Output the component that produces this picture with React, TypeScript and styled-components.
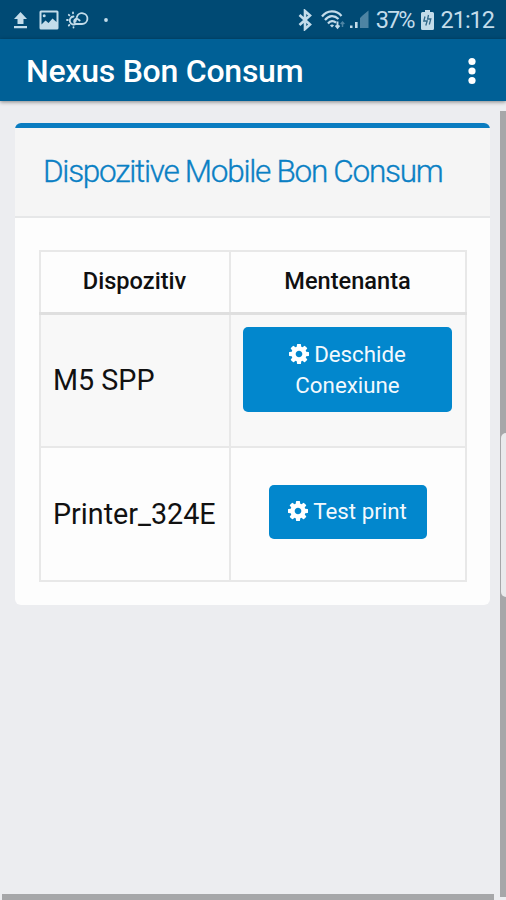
import React from "react";
import styled, { createGlobalStyle } from "styled-components";

const GlobalStyle = createGlobalStyle`
  *, *::before, *::after { box-sizing: border-box; }
  html, body { margin: 0; padding: 0; background: #ecedf0; }
  body { font-family: Roboto, "Liberation Sans", sans-serif; overflow: hidden; }
`;

const Screen = styled.div`
  width: 506px;
  height: 900px;
  display: flex;
  flex-direction: column;
  background: #ecedf0;
`;

const StatusBar = styled.div`
  height: 39px;
  flex: none;
  display: flex;
  justify-content: space-between;
  padding: 0 12px 0 13px;
  background: #004a74;
  color: #c3dcea;
`;

const StatusGroup = styled.div`
  display: flex;
  align-items: center;
`;

const StatusIcon = styled.svg<{ $gap: number }>`
  flex: none;
  margin-right: ${(p) => p.$gap}px;
`;

const StatusText = styled.span<{ $spacing: number; $gap?: number }>`
  font-size: 23.5px;
  line-height: 28px;
  padding-top: 1px;
  letter-spacing: ${(p) => p.$spacing}px;
  margin-right: ${(p) => p.$gap ?? 0}px;
  white-space: nowrap;
`;

const AppBar = styled.header`
  height: 62px;
  flex: none;
  display: flex;
  align-items: center;
  justify-content: space-between;
  padding: 2px 29px 0 26px;
  background: #006096;
  box-shadow: 0 1px 4px rgba(0, 0, 0, 0.45);
  z-index: 1;
`;

const AppTitle = styled.h1`
  margin: 0;
  font-size: 32px;
  line-height: 40px;
  font-weight: 500;
  letter-spacing: -0.25px;
  color: #fff;
  white-space: nowrap;
`;

const Viewport = styled.div`
  flex: 1;
  min-height: 0;
  display: grid;
  grid-template-columns: 500px 6px;
`;

const Content = styled.main`
  display: flex;
  flex-direction: column;
  justify-content: space-between;
  padding: 22px 6px 0 2px;
`;

const HorizontalBar = styled.div`
  height: 6px;
  background: #a6a7a9;
`;

const VerticalTrack = styled.div`
  margin: 10px 0 3px;
  padding: 322px 0 0 1px;
  background: #a6a7a9;
`;

const VerticalThumb = styled.div`
  height: 164px;
  border-radius: 5px 0 0 5px;
  background: #e9eaec;
`;

const Card = styled.section`
  width: 475px;
  margin-left: 13px;
  border-radius: 6px;
  overflow: hidden;
  background: #fdfdfd;
`;

const CardHeader = styled.div`
  height: 95px;
  padding: 21px 29px 0 28px;
  border-top: 5px solid #0a7cc0;
  border-bottom: 2px solid #e6e7e8;
  background: #f5f5f5;
`;

const CardTitle = styled.h2`
  margin: 0;
  font-size: 31.5px;
  line-height: 46px;
  font-weight: 300;
  letter-spacing: -1.27px;
  color: #0a80c4;
  -webkit-text-stroke: 0.35px #0a80c4;
  white-space: nowrap;
`;

const CardBody = styled.div`
  padding: 32px 23px 23px 24px;
`;

const DeviceTable = styled.table`
  width: 427px;
  table-layout: fixed;
  border-collapse: collapse;
`;

const HeadCell = styled.th<{ $width: number }>`
  width: ${(p) => p.$width}px;
  height: 62px;
  padding: 0 1px 2px 0;
  border: 2px solid #e8e8e8;
  border-bottom: 3px solid #dfdfdf;
  font-size: 23.6px;
  font-weight: 500;
  color: #101010;
`;

const DeviceRow = styled.tr<{ $striped?: boolean }>`
  height: 134px;
  background: ${(p) => (p.$striped ? "#f8f8f8" : "#fdfdfd")};
`;

const NameCell = styled.td`
  padding: 0 0 0 12px;
  border: 2px solid #e8e8e8;
  font-size: 28.7px;
  color: #111;
  white-space: nowrap;
`;

const ActionCell = styled.td<{ $bottom: number }>`
  padding: 0 13px ${(p) => p.$bottom}px 12px;
  border: 2px solid #e8e8e8;
  text-align: center;
`;

const ActionButton = styled.button<{ $wide?: boolean }>`
  display: block;
  width: ${(p) => (p.$wide ? 209 : 158)}px;
  height: ${(p) => (p.$wide ? 85 : 54)}px;
  margin: 0 auto;
  padding: 0;
  border: 0;
  border-radius: 5px;
  background: #0287cd;
  color: #f3f9fd;
  font: 400 22.3px/31px Roboto, "Liberation Sans", sans-serif;
`;

const GearIcon = styled.svg`
  width: 20px;
  height: 20px;
  margin-right: 5px;
  vertical-align: -2px;
  fill: #fff;
`;

const Gear = () => (
  <GearIcon viewBox="0 0 1536 1536">
    <path d="M1024 768q0-106-75-181t-181-75-181 75-75 181 75 181 181 75 181-75 75-181zm512-109v222q0 12-8 23t-20 13l-185 28q-19 54-39 91 35 50 107 138 10 12 10 25t-9 23q-27 37-99 108t-94 71q-12 0-26-9l-138-108q-44 23-91 38-16 136-29 186-7 28-36 28h-222q-14 0-24.500-8.500t-11.500-21.500l-28-184q-49-16-90-37l-141 107q-10 9-25 9-14 0-25-11-126-114-165-168-7-10-7-23 0-12 8-23 15-21 51-66.500t54-70.500q-27-50-41-99l-183-27q-13-2-21-12.500t-8-23.500v-222q0-12 8-23t19-13l186-28q14-46 39-92-40-57-107-138-10-12-10-24 0-10 9-23 26-36 98.500-107.500t94.500-71.500q13 0 26 10l138 107q44-23 91-38 16-136 29-186 7-28 36-28h222q14 0 24.500 8.500t11.500 21.500l28 184q49 16 90 37l142-107q9-9 24-9 13 0 25 10 129 119 165 170 7 8 7 22 0 12-8 23-15 21-51 66.500t-54 70.500q26 50 41 98l183 28q13 2 21 12.500t8 23.500z" />
  </GearIcon>
);

const UploadIcon = () => (
  <StatusIcon $gap={11} width="15" height="18" viewBox="0 0 15 18" fill="currentColor">
    <path d="M7.500 1 14 8h-3.500v5h-6V8H1zM1 15h13v2.200H1z" />
  </StatusIcon>
);

const PictureIcon = () => (
  <StatusIcon $gap={7} width="20" height="20" viewBox="0 0 20 20" fill="currentColor">
    <path
      fillRule="evenodd"
      d="M2 .5h16q1.500 0 1.500 1.500v16q0 1.500-1.500 1.500H2Q.5 19.500.5 18V2Q.5.500 2 .500zM2.500 2.500v12l4-4 3 2.500 4-4.500 4 3.500V2.500zM5.200 4.300a1.500 1.500 0 1 1 0 3 1.500 1.500 0 0 1 0-3z"
    />
  </StatusIcon>
);

const WeatherIcon = () => (
  <StatusIcon
    $gap={15}
    width="23"
    height="18"
    viewBox="0 0 23 18"
    fill="none"
    stroke="currentColor"
    strokeWidth="1.800"
    strokeLinecap="round"
  >
    <path d="M10.500 13h5.500a5.400 5.400 0 1 0-5.200-6.800L9.500 10.500" />
    <path d="M10.500 13a2.600 2.600 0 1 1 1.200-5l2 1.500" />
    <path d="M7.500 5.500a4 4 0 1 0 2.500 7.300" />
    <path d="M7 1.500v.8M2.800 3.800l.6.600M1 9h.8M2.800 14.500l.6-.6M7.500 16.500v-.4" />
  </StatusIcon>
);

const DotIcon = () => (
  <StatusIcon $gap={0} width="4" height="4" viewBox="0 0 4 4" fill="currentColor">
    <circle cx="2" cy="2" r="1.900" />
  </StatusIcon>
);

const BluetoothIcon = () => (
  <StatusIcon
    $gap={9}
    width="14"
    height="22"
    viewBox="0 0 14 22"
    fill="none"
    stroke="currentColor"
    strokeWidth="2.600"
    strokeLinejoin="miter"
  >
    <path d="M1.500 6 12 15.500l-5 4.500V2l5 4.500L1.500 16" />
  </StatusIcon>
);

const WifiIcon = () => (
  <StatusIcon $gap={4} width="24" height="20" viewBox="0 0 24 20" fill="none" stroke="currentColor" strokeWidth="2.200">
    <path d="M1 6.500C6-.2 15.500-.2 20.500 6M4 10c4-5 9.500-5 13.500-1M7 13.500c2.400-3 5.500-3 8-.8" />
    <path d="M9 15.500c1.200-1.500 3-1.500 4 0l-2 2z" fill="currentColor" stroke="none" />
    <path d="M16.500 11.500v6M14.500 15.500l2 2.300 2-2.300" strokeWidth="1.900" />
    <path d="M21.500 17v-5M19.700 14l1.800-2 1.800 2" strokeWidth="1.500" opacity="0.400" />
  </StatusIcon>
);

const SignalIcon = () => (
  <StatusIcon $gap={7} width="20" height="19" viewBox="0 0 20 19" fill="currentColor">
    <path d="M1 15.500h2.500V18H1zM6 12h2.600v6H6z" />
    <path d="M11 8l2.500-2.500V18H11zM13.500 5.500l6-5V18h-6z" opacity="0.400" />
  </StatusIcon>
);

const BatteryIcon = () => (
  <StatusIcon $gap={6} width="13" height="20" viewBox="0 0 13 20" fill="currentColor">
    <path
      fillRule="evenodd"
      d="M4 0h5v2h2.500q1.500 0 1.500 1.500v15q0 1.500-1.500 1.500h-10Q0 20 0 18.500v-15Q0 2 1.500 2H4z"
    />
    <path
      d="M4 6.500 2.800 11h3.400L4.800 15.500M7.500 5 6.600 9h3.200L8.300 14.500"
      fill="none"
      stroke="#31698a"
      strokeWidth="1.300"
    />
  </StatusIcon>
);

const OverflowIcon = () => (
  <svg width="10" height="28" viewBox="0 0 10 28" fill="#fff">
    <circle cx="5" cy="4.500" r="3.600" />
    <circle cx="5" cy="14" r="3.600" />
    <circle cx="5" cy="23.500" r="3.600" />
  </svg>
);

export default function App() {
  return (
    <>
      <GlobalStyle />
      <Screen>
        <StatusBar>
          <StatusGroup>
            <UploadIcon />
            <PictureIcon />
            <WeatherIcon />
            <DotIcon />
          </StatusGroup>
          <StatusGroup>
            <BluetoothIcon />
            <WifiIcon />
            <SignalIcon />
            <StatusText $spacing={-2} $gap={8}>37%</StatusText>
            <BatteryIcon />
            <StatusText $spacing={-1}>21:12</StatusText>
          </StatusGroup>
        </StatusBar>
        <AppBar>
          <AppTitle>Nexus Bon Consum</AppTitle>
          <OverflowIcon />
        </AppBar>
        <Viewport>
          <Content>
            <Card>
              <CardHeader>
                <CardTitle>Dispozitive Mobile Bon Consum</CardTitle>
              </CardHeader>
              <CardBody>
                <DeviceTable>
                  <thead>
                    <tr>
                      <HeadCell $width={190}>Dispozitiv</HeadCell>
                      <HeadCell $width={236}>Mentenanta</HeadCell>
                    </tr>
                  </thead>
                  <tbody>
                    <DeviceRow $striped>
                      <NameCell>M5 SPP</NameCell>
                      <ActionCell $bottom={21}>
                        <ActionButton $wide>
                          <Gear />
                          Deschide
                          <br />
                          Conexiune
                        </ActionButton>
                      </ActionCell>
                    </DeviceRow>
                    <DeviceRow>
                      <NameCell>Printer_324E</NameCell>
                      <ActionCell $bottom={5}>
                        <ActionButton>
                          <Gear />
                          Test print
                        </ActionButton>
                      </ActionCell>
                    </DeviceRow>
                  </tbody>
                </DeviceTable>
              </CardBody>
            </Card>
            <HorizontalBar />
          </Content>
          <VerticalTrack>
            <VerticalThumb />
          </VerticalTrack>
        </Viewport>
      </Screen>
    </>
  );
}
